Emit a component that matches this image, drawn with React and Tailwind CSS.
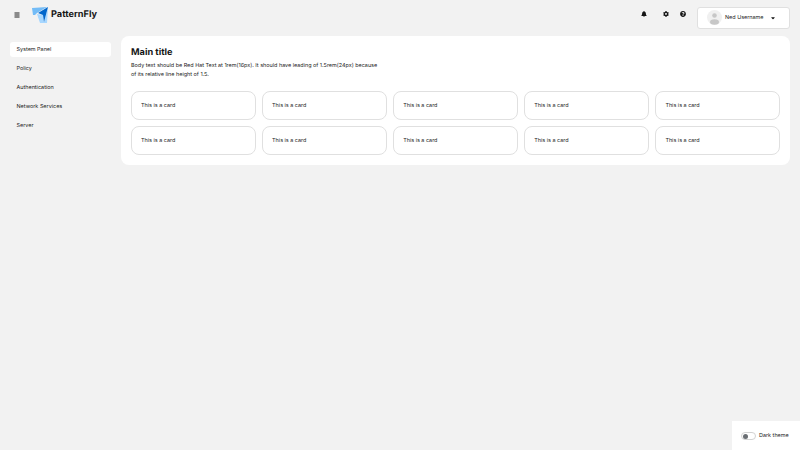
import React from "react";
import { FaBell, FaCog, FaQuestionCircle, FaCaretDown } from "react-icons/fa";

const nav = ["System Panel", "Policy", "Authentication", "Network Services", "Server"];

function Card() {
  return (
    <div className="h-[29px] flex items-center pl-[9px] pt-[3px] bg-white border border-[#e0e0e0] rounded-[8px] text-[5.45px] text-[#222222]">
      This is a card
    </div>
  );
}

export default function App() {
  return (
    <div className="relative w-[800px] h-[450px] overflow-hidden bg-[#f2f2f2] font-['Inter',sans-serif] antialiased [text-rendering:geometricPrecision]">
      <header className="flex items-center h-[36px] pl-[14px] pr-[10px]">
        <svg width="7" height="6" viewBox="0 0 7 6" className="mr-[11px] mt-[-7px]">
          <rect x="0.5" y="0.5" width="5" height="1" fill="#222222" />
          <rect x="0.5" y="2.5" width="5" height="1" fill="#222222" />
          <rect x="0.5" y="4.5" width="5" height="1" fill="#222222" />
        </svg>
        <div className="flex items-center mt-[-7px]">
          <svg width="17" height="16" viewBox="0 0 17 16">
            <polygon points="0,1 15,0 5,6 3,8 1,8" fill="#73bcf7" />
            <polygon points="5,7 11,8 12,15 16,1 15,16 8,16" fill="#a7d7ff" />
            <polygon points="16,0 6,6 11,8 12,15" fill="#06c" />
          </svg>
          <span className="ml-[2px] text-[9.2px] font-bold text-[#151515]">PatternFly</span>
        </div>
        <div className="ml-auto flex items-center">
          <div className="flex items-center mt-[-8px] mr-[11px]">
            <FaBell className="text-[#151515] w-[6px] h-[6px] mr-[16px]" />
            <FaCog className="text-[#151515] w-[6px] h-[6px] mr-[11px]" />
            <FaQuestionCircle className="text-[#151515] w-[6px] h-[6px]" />
          </div>
          <div className="w-[93px] h-[22px] mt-[-1px] bg-white border border-[#e0e0e0] rounded-[3px] flex items-center pl-[9px]">
            <svg width="15" height="15" viewBox="0 0 15 15">
              <circle cx="7.5" cy="7.5" r="7.5" fill="#f0f0f0" />
              <circle cx="7.5" cy="5.5" r="2.3" fill="#c7c7c7" />
              <ellipse cx="7.5" cy="12" rx="4.5" ry="2.8" fill="#c7c7c7" />
            </svg>
            <span className="ml-[3px] pt-[1px] text-[5.45px] text-[#222222]">Ned Username</span>
            <FaCaretDown className="ml-auto mr-[13px] w-[6px] h-[6px] text-[#151515]" />
          </div>
        </div>
      </header>
      <div className="flex pl-[10px] pr-[10px] gap-[10px] items-start">
        <nav className="w-[101px] pt-[6px] flex flex-col gap-[4px]">
          {nav.map((n, i) => (
            <div key={n} className={"h-[15px] flex items-center pl-[6.5px] pt-[2px] rounded-[3px] text-[5.45px] text-[#222222] " + (i === 0 ? "bg-white" : "")}>
              {n}
            </div>
          ))}
        </nav>
        <main className="flex-1 bg-white rounded-[8px] px-[10px] pt-[9px] pb-[10px]">
          <h1 className="text-[9.2px] leading-[12px] pt-[1.5px] font-bold text-[#151515]">Main title</h1>
          <p className="mt-[3.5px] w-[250px] text-[5.45px] leading-[8.5px] text-[#222222]">
            Body text should be Red Hat Text at 1rem(16px). It should have leading of 1.5rem(24px) because of its relative line height of 1.5.
          </p>
          <div className="mt-[11.5px] grid grid-cols-5 gap-x-[6.5px] gap-y-[6px]">
            {Array.from({ length: 10 }).map((_, i) => (
              <Card key={i} />
            ))}
          </div>
        </main>
      </div>
      <div className="absolute right-0 bottom-0 w-[68px] h-[29px] bg-white flex items-center pl-[9px]">
        <div className="w-[15px] h-[8px] mt-[1px] border border-[#d2d2d2] rounded-full flex items-center pl-[1px]">
          <div className="w-[5px] h-[5px] rounded-full bg-[#6a6e73]" />
        </div>
        <span className="ml-[3px] pt-[2px] text-[5.45px] text-[#222222]">Dark theme</span>
      </div>
    </div>
  );
}
